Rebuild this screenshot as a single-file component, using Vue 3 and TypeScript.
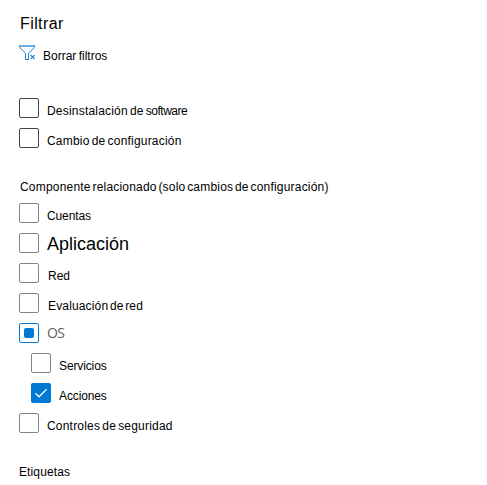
<script setup lang="ts">
type State = 'off' | 'on' | 'mixed'
interface Option {
  id: string
  label: string
  tail?: string
  state: State
  child?: boolean
}

const changeTypes: Option[] = [
  { id: 'uninstall', label: 'Desinstalación de ', tail: 'software', state: 'off' },
  { id: 'config', label: 'Cambio de configuración', state: 'off' },
]

const components: Option[] = [
  { id: 'accounts', label: 'Cuentas', state: 'off' },
  { id: 'application', label: 'Aplicación', state: 'off' },
  { id: 'network', label: 'Red', state: 'off' },
  { id: 'assessment', label: 'Evaluación de red', state: 'off' },
  { id: 'os', label: 'OS', state: 'mixed' },
  { id: 'services', label: 'Servicios', state: 'off', child: true },
  { id: 'shares', label: 'Acciones', state: 'on', child: true },
  { id: 'controls', label: 'Controles de seguridad', state: 'off' },
]
</script>

<template>
  <main class="panel">
    <h1 class="title"><span>Filtrar</span></h1>
    <div class="clear">
      <svg class="funnel" width="18" height="16" viewBox="0 0 18 16" fill="none" stroke="#1a80d2">
        <path d="M0 1H16" stroke-width="1.3" />
        <path d="M0.7 1.2V2.5L6.5 8.2V14.5H9.5V8.2L15.3 2.5V1.2" />
        <path d="M11.6 10L15.6 14.2M15.6 10L11.6 14.2" stroke-width="1.1" />
      </svg>
      <span class="clear-text">Borrar filtros</span>
    </div>

    <section class="group dark">
      <div v-for="o in changeTypes" :key="o.id" class="row">
        <span class="box"></span>
        <span class="label" :class="o.id">{{ o.label }}<span v-if="o.tail" class="tail">{{ o.tail }}</span></span>
      </div>
    </section>

    <h2 class="heading"><span class="related">Componente relacionado (solo cambios de configuración)</span></h2>
    <section class="group">
      <div v-for="o in components" :key="o.id" class="row" :class="{ child: o.child }">
        <span class="box" :class="o.state">
          <svg v-if="o.state === 'on'" width="20" height="20" viewBox="0 0 20 20" fill="none" stroke="#fff" stroke-width="1.2">
            <path d="M4.4 10.3L8 13.8L15.6 6.3" />
          </svg>
        </span>
        <span class="label" :class="o.id">{{ o.label }}</span>
      </div>
    </section>

    <h2 class="heading tags"><span>Etiquetas</span></h2>
  </main>
</template>

<style>
body {
  background: #fff;
}
</style>

<style scoped>
.panel {
  box-sizing: border-box;
  height: 485px;
  padding: 14px 0 0 19px;
  overflow: hidden;
  color: #000;
  font-family: "Liberation Sans", Arial, sans-serif;
  font-size: 12px;
  white-space: nowrap;
}
.title {
  margin: 0;
  padding-left: 1px;
  height: 31px;
  font-size: 16px;
  font-weight: 400;
  line-height: 20px;
  letter-spacing: 0.4px;
}
.clear {
  display: flex;
  height: 53px;
}
.clear-text {
  margin-left: 6px;
  padding-top: 1px;
  line-height: 20px;
  word-spacing: -1px;
}
.row {
  display: flex;
  height: 30px;
}
.child {
  padding-left: 12px;
}
.box {
  box-sizing: border-box;
  flex: none;
  width: 20px;
  height: 20px;
  border: 1px solid #858381;
  border-radius: 2px;
}
.dark .box {
  border-color: #454341;
}
.box.mixed {
  display: grid;
  place-items: center;
  border-color: #0078d4;
}
.box.mixed::after {
  content: "";
  width: 10px;
  height: 10px;
  border-radius: 2px;
  background: #0078d4;
}
.box.on {
  border: 0;
  background: #0078d4;
}
.box svg {
  display: block;
}
.label {
  margin-left: 8px;
  padding-top: 3px;
  line-height: 20px;
}
.uninstall,
.config,
.controls,
.related {
  letter-spacing: 0.2px;
  word-spacing: -1.4px;
}
.related {
  word-spacing: -1.8px;
}
.tail {
  letter-spacing: -0.5px;
}
.application {
  padding-top: 1px;
  font-size: 18px;
}
.network,
.assessment {
  margin-left: 9px;
}
.assessment {
  letter-spacing: 0.15px;
  word-spacing: -1.8px;
}
.accounts,
.services,
.shares {
  letter-spacing: -0.12px;
}
.os {
  padding-top: 0;
  color: #605e5c;
  font-family: "Open Sans", "Noto Sans", sans-serif;
  font-size: 14px;
  letter-spacing: -0.7px;
}
.heading {
  margin: 0;
  padding-left: 1px;
  height: 26px;
  font-size: 12px;
  font-weight: 400;
  line-height: 20px;
}
.group.dark {
  height: 79px;
}
.tags {
  height: 20px;
  padding: 19px 0 0;
  letter-spacing: 0.12px;
}
</style>
